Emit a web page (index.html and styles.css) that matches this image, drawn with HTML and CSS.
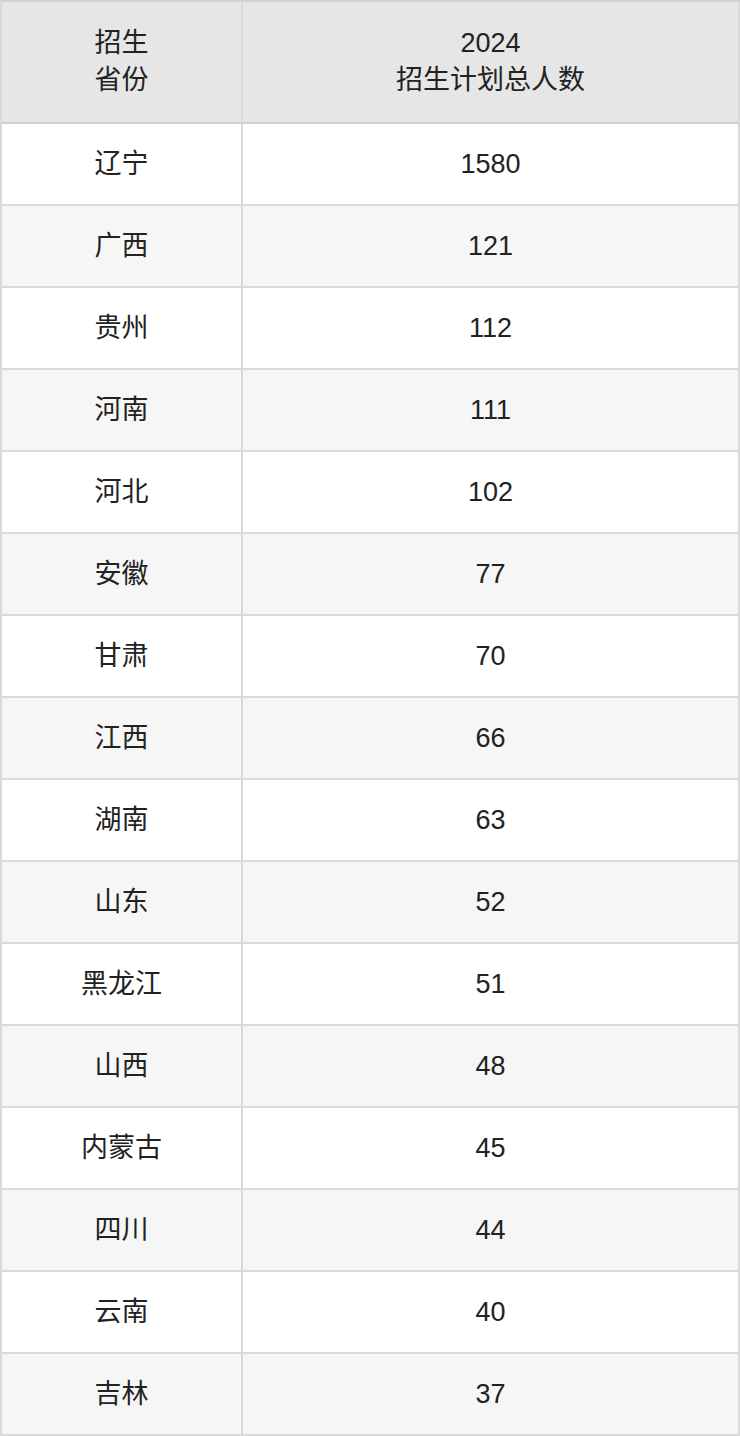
FILE: index.html
```html
<!DOCTYPE html>
<html lang="zh">
<head>
<meta charset="utf-8">
<title>招生计划</title>
<link rel="stylesheet" href="styles.css">
</head>
<body>
<table class="plan">
  <colgroup><col class="c1"><col class="c2"></colgroup>
  <thead>
    <tr><th>招生<br>省份</th><th>2024<br>招生计划总人数</th></tr>
  </thead>
  <tbody>
    <tr><td>辽宁</td><td>1580</td></tr>
    <tr><td>广西</td><td>121</td></tr>
    <tr><td>贵州</td><td>112</td></tr>
    <tr><td>河南</td><td>111</td></tr>
    <tr><td>河北</td><td>102</td></tr>
    <tr><td>安徽</td><td>77</td></tr>
    <tr><td>甘肃</td><td>70</td></tr>
    <tr><td>江西</td><td>66</td></tr>
    <tr><td>湖南</td><td>63</td></tr>
    <tr><td>山东</td><td>52</td></tr>
    <tr><td>黑龙江</td><td>51</td></tr>
    <tr><td>山西</td><td>48</td></tr>
    <tr><td>内蒙古</td><td>45</td></tr>
    <tr><td>四川</td><td>44</td></tr>
    <tr><td>云南</td><td>40</td></tr>
    <tr><td>吉林</td><td>37</td></tr>
  </tbody>
</table>
</body>
</html>
```
FILE: styles.css
```css
html, body {
  margin: 0;
  padding: 0;
  background: #ffffff;
}
.plan {
  width: 740px;
  table-layout: fixed;
  border-collapse: separate;
  border-spacing: 0;
  border-top: 2px solid #d2d2d2;
  border-left: 2px solid #d9d9d9;
  font-family: "Liberation Sans", "Noto Sans CJK SC", sans-serif;
  font-size: 27px;
  line-height: 37px;
  color: #222222;
}
.plan .c1 { width: 241px; }
.plan .c2 { width: 497px; }
.plan th,
.plan td {
  box-sizing: border-box;
  padding: 0;
  text-align: center;
  vertical-align: middle;
  border-right: 2px solid #d9d9d9;
  border-bottom: 2px solid #d9d9d9;
  font-weight: normal;
}
.plan th {
  height: 122px;
  background: #e6e6e6;
  border-bottom-color: #d0d0d0;
}
.plan td {
  height: 82px;
}
.plan tbody tr:nth-child(even) td {
  background: #f6f6f6;
}
```
